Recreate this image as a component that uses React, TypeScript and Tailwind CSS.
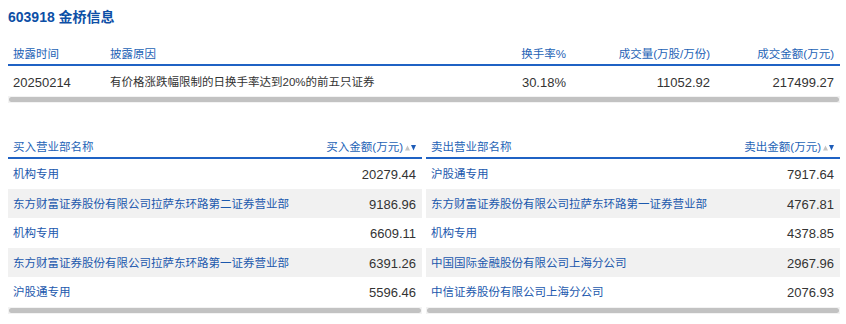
import React from "react";

const buys = [
  ["机构专用", "20279.44"],
  ["东方财富证券股份有限公司拉萨东环路第二证券营业部", "9186.96"],
  ["机构专用", "6609.11"],
  ["东方财富证券股份有限公司拉萨东环路第一证券营业部", "6391.26"],
  ["沪股通专用", "5596.46"],
];
const sells = [
  ["沪股通专用", "7917.64"],
  ["东方财富证券股份有限公司拉萨东环路第一证券营业部", "4767.81"],
  ["机构专用", "4378.85"],
  ["中国国际金融股份有限公司上海分公司", "2967.96"],
  ["中信证券股份有限公司上海分公司", "2076.93"],
];

function SortIcon() {
  return (
    <svg width="11" height="7" viewBox="0 0 11 7" className="ml-[2px]">
      <polygon points="0,6.5 2.5,1.5 5,6.5" fill="#c4c4c4" />
      <polygon points="6,1 11,1 8.5,6.5" fill="#1d5cb8" />
    </svg>
  );
}

function Scrollbar() {
  return (
    <div className="h-[7px] bg-[#f3f3f3] flex items-center px-[1px]">
      <div className="h-[5px] w-full rounded-full bg-[#c2c2c2]" />
    </div>
  );
}

function Broker({ title, amount, rows }: { title: string; amount: string; rows: string[][] }) {
  return (
    <div className="w-[414px] flex flex-col">
      <div className="h-[24px] pt-[3px] flex items-center border-b-2 border-[#1f62c4] text-[#2563b6] text-[11.5px]">
        <div className="flex-1 pl-[5px]">{title}</div>
        <div className="w-[110px] pr-[6px] flex items-center justify-end">
          {amount}
          <SortIcon />
        </div>
      </div>
      {rows.map((r, i) => (
        <div
          key={i}
          className={`h-[29.5px] pt-[2px] flex items-center ${i % 2 === 1 ? "bg-[#f1f1f1]" : "bg-white"}`}
        >
          <div className="flex-1 pl-[5px] text-[11.5px] text-[#1b58ad] whitespace-nowrap">{r[0]}</div>
          <div className="w-[110px] pr-[6px] text-right text-[13px] text-[#333]">{r[1]}</div>
        </div>
      ))}
      <Scrollbar />
    </div>
  );
}

export default function App() {
  return (
    <div className="w-[846px] h-[324px] bg-white text-[12px] font-['Liberation_Sans','Noto_Sans_CJK_SC',sans-serif] overflow-hidden">
      <div className="h-[34px] flex items-center pl-2 text-[14px] font-bold text-[#0d4fa6]">
        603918 金桥信息
      </div>
      <div className="ml-2 mt-[8px] w-[832px]">
        <div className="h-[24px] pt-[3px] flex items-center border-b-2 border-[#1f62c4] text-[#2563b6] text-[11.5px]">
          <div className="w-[97px] pl-[5px]">披露时间</div>
          <div className="w-[367px] pl-[5px]">披露原因</div>
          <div className="w-[100px] pr-[6px] text-right">换手率%</div>
          <div className="w-[144px] pr-[6px] text-right">成交量(万股/万份)</div>
          <div className="w-[124px] pr-[6px] text-right">成交金额(万元)</div>
        </div>
        <div className="h-[30px] pt-[3px] flex items-center text-[#333]">
          <div className="w-[97px] pl-[5px] text-[13px]">20250214</div>
          <div className="w-[367px] pl-[5px] text-[11.5px]">有价格涨跌幅限制的日换手率达到20%的前五只证券</div>
          <div className="w-[100px] pr-[6px] text-right text-[13px]">30.18%</div>
          <div className="w-[144px] pr-[6px] text-right text-[13px]">11052.92</div>
          <div className="w-[124px] pr-[6px] text-right text-[13px]">217499.27</div>
        </div>
        <Scrollbar />
      </div>
      <div className="ml-2 mt-[32px] flex gap-[4px]">
        <Broker title="买入营业部名称" amount="买入金额(万元)" rows={buys} />
        <Broker title="卖出营业部名称" amount="卖出金额(万元)" rows={sells} />
      </div>
    </div>
  );
}
